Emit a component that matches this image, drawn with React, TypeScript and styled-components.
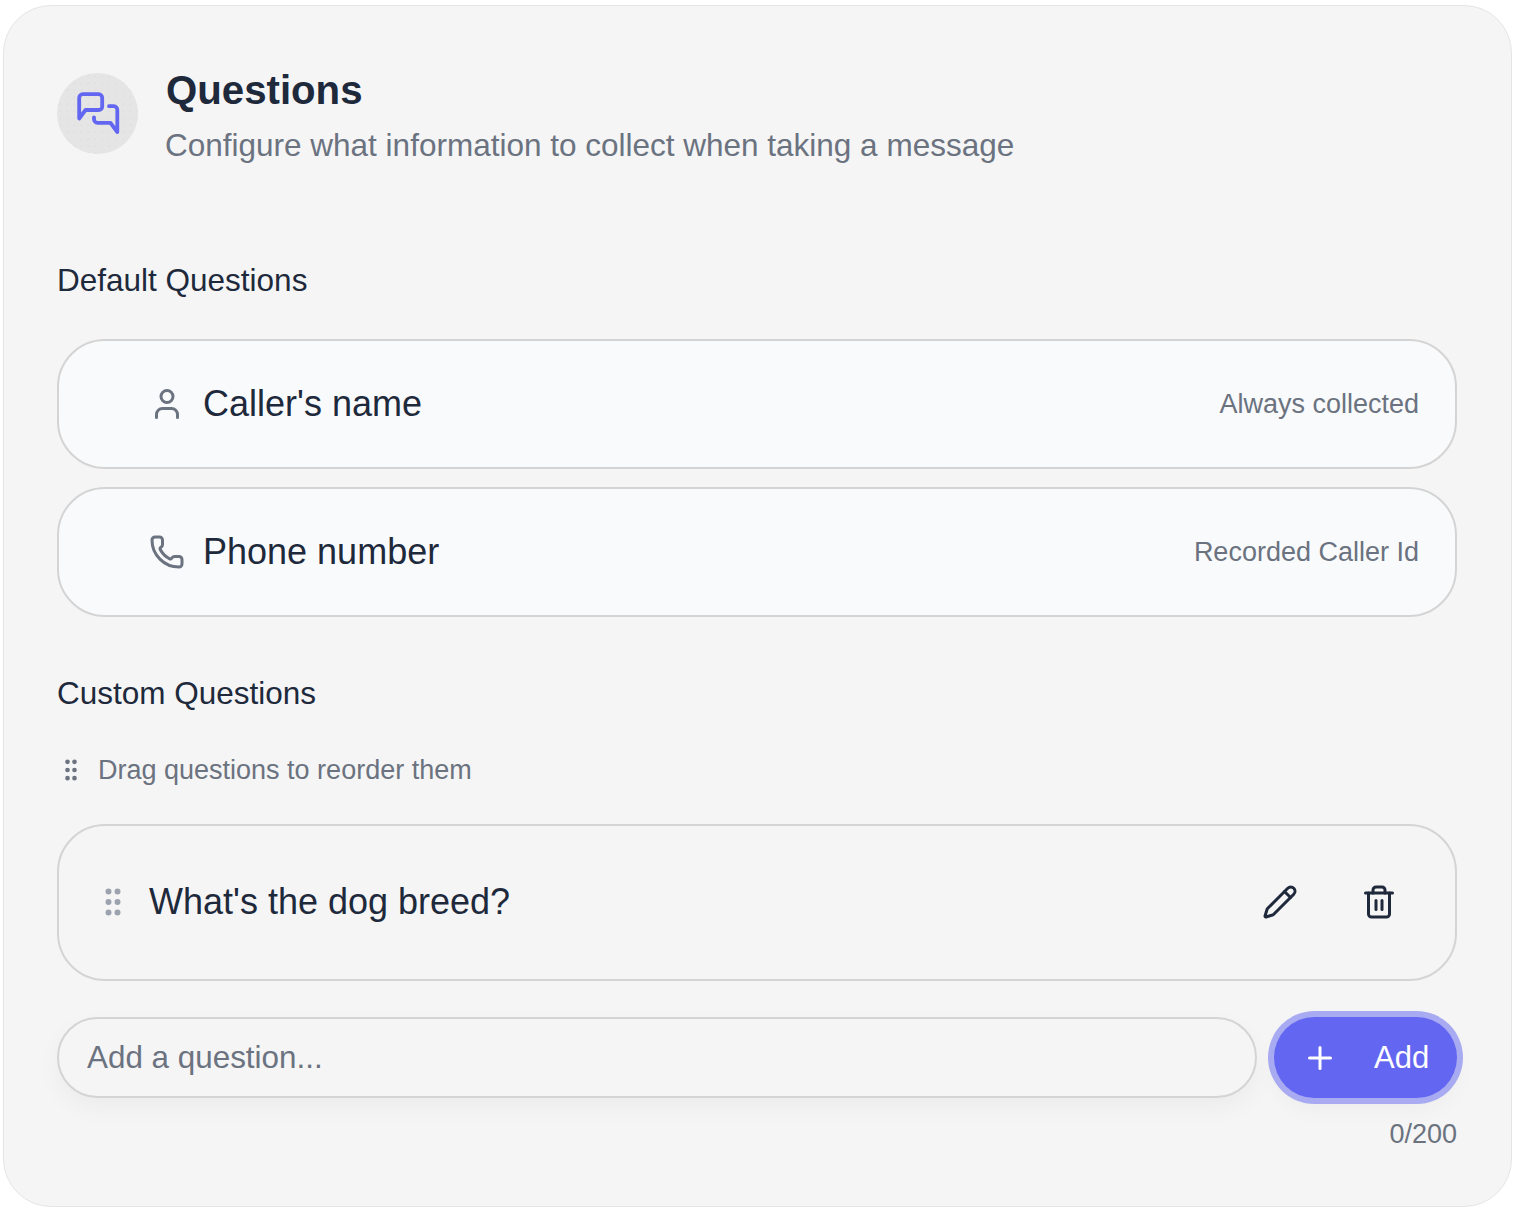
import { GripVertical, Pencil, Phone, Plus, Trash2, User } from 'lucide-react';
import styled, { createGlobalStyle } from 'styled-components';

const GlobalStyle = createGlobalStyle`
  html, body {
    margin: 0;
    padding: 0;
    background: #fff;
  }
  * {
    box-sizing: border-box;
  }
`;

const Card = styled.div`
  width: 1509px;
  height: 1202px;
  margin: 5px 2px 0 3px;
  padding: 67px 54px 0 53px;
  background: #f5f5f5;
  border: 1px solid #e5e5e5;
  border-radius: 48px;
  font-family: 'Liberation Sans', Arial, sans-serif;
  color: #1e293b;
`;

const Header = styled.div`
  display: flex;
  align-items: flex-start;
  gap: 27px;
  margin-bottom: 95px;
`;

const Avatar = styled.div`
  display: flex;
  align-items: center;
  justify-content: center;
  flex: none;
  width: 81px;
  height: 81px;
  border-radius: 50%;
  background-color: #e5e5e5;
  background-image: radial-gradient(#e0e0e0 1px, transparent 1px);
  background-size: 7px 7px;
  color: #6366f1;
`;

const HeaderText = styled.div`
  display: flex;
  flex-direction: column;
  gap: 14px;
`;

const Title = styled.div`
  padding-left: 1px;
  font-size: 40.2px;
  line-height: 36px;
  font-weight: 700;
`;

const Subtitle = styled.div`
  font-size: 31.5px;
  line-height: 44px;
  color: #6b7280;
`;

const SectionLabel = styled.div`
  font-size: 31.5px;
  line-height: 36px;
`;

const DefaultList = styled.div`
  display: flex;
  flex-direction: column;
  gap: 18px;
  margin: 41px 0 58px;
`;

const DefaultRow = styled.div`
  display: flex;
  align-items: center;
  gap: 18px;
  height: 130px;
  padding: 0 36px 0 90px;
  background: #f9fafb;
  border: 2px solid #d4d4d4;
  border-radius: 48px;
`;

const RowIcon = styled.span`
  display: flex;
  color: #6b7280;
`;

const RowText = styled.span`
  flex: 1;
  font-size: 36px;
  line-height: 48px;
`;

const RowNote = styled.span`
  font-size: 27px;
  color: #6b7280;
`;

const DragHint = styled.div`
  display: flex;
  align-items: center;
  gap: 13px;
  margin: 41px 0 36px;
  font-size: 27px;
  line-height: 36px;
  color: #6b7280;
`;

const CustomRow = styled.div`
  display: flex;
  align-items: center;
  gap: 18px;
  height: 157px;
  padding: 0 40px 1px 36px;
  border: 2px solid #d4d4d4;
  border-radius: 48px;
`;

const Grip = styled.span`
  display: flex;
  color: #9ca3af;
`;

const Actions = styled.div`
  display: flex;
  gap: 27px;
`;

const IconButton = styled.button`
  display: flex;
  align-items: center;
  justify-content: center;
  width: 72px;
  height: 72px;
  padding: 0;
  border: none;
  background: none;
  color: #1e293b;
`;

const AddRow = styled.div`
  display: flex;
  align-items: center;
  gap: 17px;
  margin-top: 36px;
`;

const QuestionInput = styled.input`
  flex: 1;
  height: 81px;
  padding: 0 28px;
  background: #f5f5f5;
  border: 2px solid #d4d4d4;
  border-radius: 41px;
  outline: none;
  font: inherit;
  font-size: 31.4px;
  color: #1e293b;
  box-shadow: 0 10px 24px rgba(0, 0, 0, 0.04);

  &::placeholder {
    color: #6b7280;
    opacity: 1;
  }
`;

const AddButton = styled.button`
  display: flex;
  align-items: center;
  gap: 36px;
  flex: none;
  width: 183px;
  height: 81px;
  padding: 0 0 0 28px;
  background: #6366f1;
  border: none;
  border-radius: 41px;
  font: inherit;
  font-size: 31px;
  color: #fff;
  box-shadow: 0 0 0 6px #a8aaf2, 0 10px 24px rgba(0, 0, 0, 0.04);
`;

const Counter = styled.div`
  margin-top: 20px;
  text-align: right;
  font-size: 27px;
  line-height: 32px;
  color: #6b7280;
`;

const ChatIcon = () => (
  <svg width="44" height="44" viewBox="0 0 44 44" fill="none" stroke="currentColor" strokeWidth="3.8" strokeLinecap="round" strokeLinejoin="round">
    <path d="M26.2 14.5a3.5 3.5 0 0 1-3.5 3.5H9.5l-6.3 8.5V5.7a3.5 3.5 0 0 1 3.5-3.5h16a3.5 3.5 0 0 1 3.5 3.5z" />
    <path d="M33 14.2h4.8a3.5 3.5 0 0 1 3.5 3.5V40l-6.8-9.2H21.5a3.5 3.5 0 0 1-3.5-3.5v-2" />
  </svg>
);

const App = () => {
  return (
    <>
      <GlobalStyle />
      <Card>
        <Header>
          <Avatar>
            <ChatIcon />
          </Avatar>
          <HeaderText>
            <Title>Questions</Title>
            <Subtitle>Configure what information to collect when taking a message</Subtitle>
          </HeaderText>
        </Header>

        <SectionLabel>Default Questions</SectionLabel>
        <DefaultList>
          <DefaultRow>
            <RowIcon>
              <User size={36} />
            </RowIcon>
            <RowText>Caller's name</RowText>
            <RowNote>Always collected</RowNote>
          </DefaultRow>
          <DefaultRow>
            <RowIcon>
              <Phone size={36} />
            </RowIcon>
            <RowText>Phone number</RowText>
            <RowNote>Recorded Caller Id</RowNote>
          </DefaultRow>
        </DefaultList>

        <SectionLabel>Custom Questions</SectionLabel>
        <DragHint>
          <GripVertical size={28} />
          Drag questions to reorder them
        </DragHint>
        <CustomRow>
          <Grip>
            <GripVertical size={36} />
          </Grip>
          <RowText>What's the dog breed?</RowText>
          <Actions>
            <IconButton>
              <Pencil size={36} />
            </IconButton>
            <IconButton>
              <Trash2 size={36} />
            </IconButton>
          </Actions>
        </CustomRow>

        <AddRow>
          <QuestionInput placeholder="Add a question..." />
          <AddButton>
            <Plus size={36} />
            Add
          </AddButton>
        </AddRow>
        <Counter>0/200</Counter>
      </Card>
    </>
  );
};

export default App;
